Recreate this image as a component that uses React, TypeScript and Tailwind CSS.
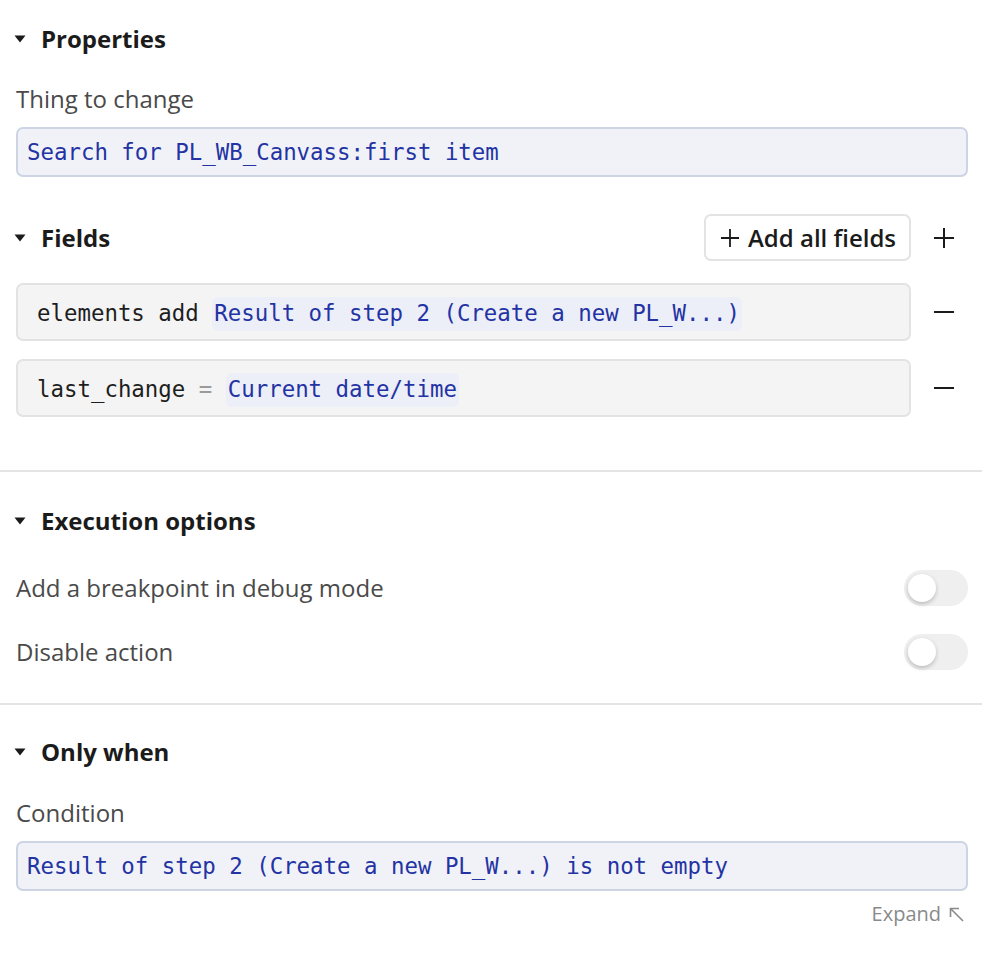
const sans = { fontFamily: '"Open Sans", "Noto Sans", sans-serif' };
const mono = { fontFamily: '"DejaVu Sans Mono", "Liberation Mono", monospace' };

function Caret() {
  return (
    <svg width="12" height="8" viewBox="0 0 12 8" className="mr-[15px] -ml-[2px] shrink-0">
      <path d="M0.5 0.5h11L6 7.5z" fill="#1b1b1b" />
    </svg>
  );
}

function PlusIcon({ size = 20 }: { size?: number }) {
  return (
    <svg width={size} height={size} viewBox="0 0 20 20" className="shrink-0">
      <path d="M10 0v20M0 10h20" stroke="#1b1b1b" strokeWidth="2" />
    </svg>
  );
}

function MinusIcon() {
  return (
    <svg width="20" height="20" viewBox="0 0 20 20" className="shrink-0">
      <path d="M0 10h20" stroke="#1b1b1b" strokeWidth="2" />
    </svg>
  );
}

function ExpandIcon() {
  return (
    <svg width="15" height="15" viewBox="0 0 15 15" className="shrink-0">
      <path d="M1.5 10V1.5H10M1.5 1.5l12.5 12.5" stroke="#8a8a8a" strokeWidth="1.6" fill="none" />
    </svg>
  );
}

function SectionHeader({ title }: { title: string }) {
  return (
    <div className="flex h-[50px] items-center">
      <Caret />
      <h2 className="text-[24px] font-bold text-[#1b1b1b]">{title}</h2>
    </div>
  );
}

function Toggle() {
  return (
    <div className="flex h-[36px] w-[64px] items-center rounded-full bg-[#efefef] px-[4px]">
      <div className="h-[28px] w-[28px] rounded-full bg-white shadow-[0_2px_4px_rgba(0,0,0,0.22)]" />
    </div>
  );
}

function Expression({ text }: { text: string }) {
  return (
    <div
      className="flex h-[50px] items-center rounded-[7px] border-2 border-[#cdd5e4] bg-[#f0f2f8] px-[9px] pt-[2px] text-[22.4px] text-[#2433a3]"
      style={mono}
    >
      {text}
    </div>
  );
}

function FieldRow({ children }: { children: React.ReactNode }) {
  return (
    <div className="flex items-center">
      <div
        className="flex h-[58px] flex-1 items-center rounded-[7px] border-2 border-[#e3e3e3] bg-[#f4f4f5] px-[19px] pt-[4px] text-[22.4px] text-[#1e1e1e]"
        style={mono}
      >
        {children}
      </div>
      <div className="flex w-[57px] justify-end pr-[14px]">
        <MinusIcon />
      </div>
    </div>
  );
}

function Pill({ text }: { text: string }) {
  return <span className="rounded-[6px] bg-[#eceef8] px-[2px] text-[#2433a3]">{text}</span>;
}

export default function App() {
  return (
    <div className="min-h-screen w-[982px] bg-white" style={sans}>
      <section className="border-b-2 border-[#e4e4e4] pb-[53px] pl-4 pr-[14px] pt-[14px]">
        <SectionHeader title="Properties" />
        <div className="mt-[15px] flex h-[40px] items-center text-[24px] text-[#4a4a4a]">Thing to change</div>
        <div className="mt-[8px]">
          <Expression text="Search for PL_WB_Canvass:first item" />
        </div>

        <div className="mt-[37px] flex h-[47px] items-center">
          <Caret />
          <h2 className="text-[24px] font-bold text-[#1b1b1b]">Fields</h2>
          <button className="ml-auto flex h-[47px] w-[207px] items-center gap-[9px] rounded-[7px] border-2 border-[#e3e3e3] bg-white pl-[15px] text-[24px] font-semibold text-[#1b1b1b]">
            <PlusIcon size={18} />
            Add all fields
          </button>
          <div className="flex w-[57px] justify-end pr-[14px]">
            <PlusIcon />
          </div>
        </div>

        <div className="mt-[22px] flex flex-col gap-[18px]">
          <FieldRow>
            <span className="whitespace-pre">elements add </span>
            <Pill text="Result of step 2 (Create a new PL_W...)" />
          </FieldRow>
          <FieldRow>
            <span className="whitespace-pre">last_change </span>
            <span className="whitespace-pre text-[#9a9a9a]">= </span>
            <Pill text="Current date/time" />
          </FieldRow>
        </div>
      </section>

      <section className="border-b-2 border-[#e4e4e4] pb-[33px] pl-4 pr-[14px] pt-[24px]">
        <SectionHeader title="Execution options" />
        <div className="mt-[24px] flex h-[36px] items-center justify-between text-[24px] text-[#4a4a4a]">
          <span>Add a breakpoint in debug mode</span>
          <Toggle />
        </div>
        <div className="mt-[28px] flex h-[36px] items-center justify-between text-[24px] text-[#4a4a4a]">
          <span>Disable action</span>
          <Toggle />
        </div>
      </section>

      <section className="pb-10 pl-4 pr-[14px] pt-[22px]">
        <SectionHeader title="Only when" />
        <div className="mt-[16px] flex h-[40px] items-center text-[24px] text-[#4a4a4a]">Condition</div>
        <div className="mt-[8px]">
          <Expression text="Result of step 2 (Create a new PL_W...) is not empty" />
        </div>
        <div className="mt-[11px] flex h-[24px] items-center justify-end gap-[8px] pr-[4px] text-[20px] text-[#8a8a8a]">
          Expand
          <ExpandIcon />
        </div>
      </section>
    </div>
  );
}
